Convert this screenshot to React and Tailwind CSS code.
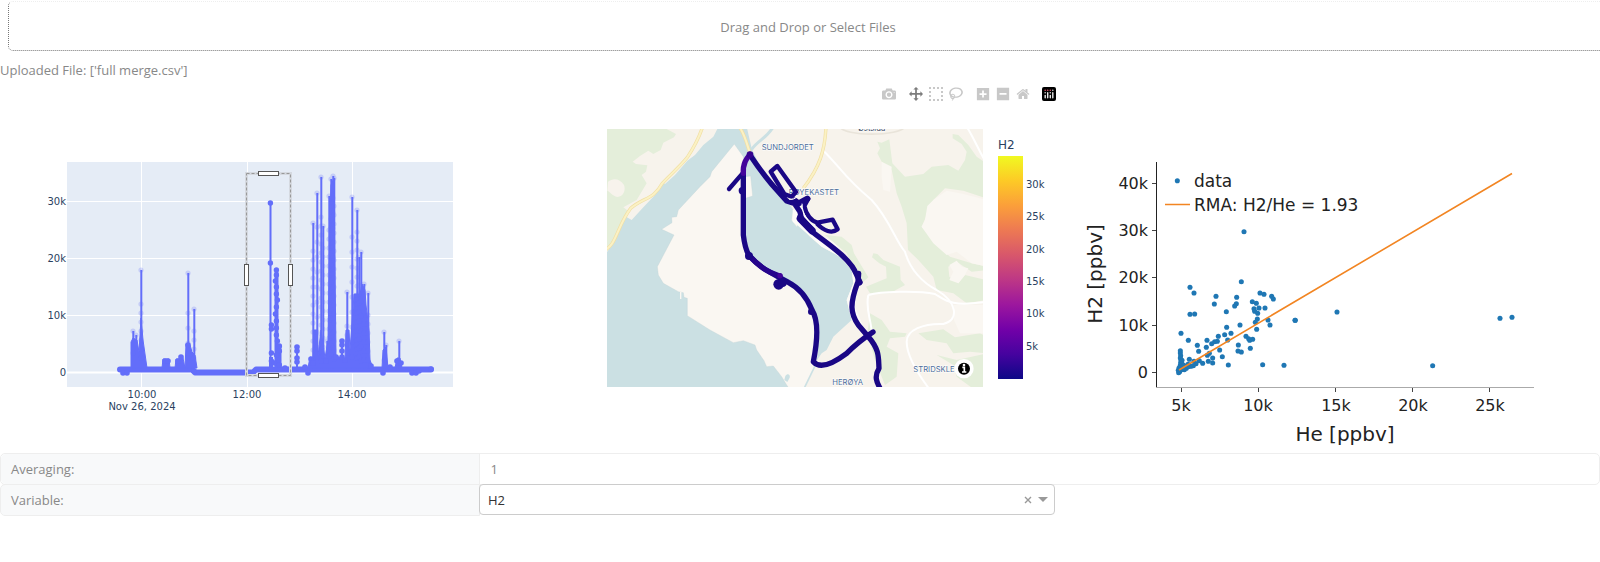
import React, { useState } from "react";

const INDIGO = "#636efa";
const TRACK = "#1a0785";

/* [x, top] of the unselected peaks; every peak falls back to the base line */
const peaks = [
  [133, 331], [136, 335], [141, 270], [188, 273], [194, 309],
  [313, 223], [317, 193], [321, 177], [323, 226], [327, 341], [329, 196],
  [331, 179], [333, 176], [334, 178], [347, 292], [352, 197], [357, 210],
  [359, 257], [361, 252], [364, 284], [368, 293], [384, 332], [386, 345], [399, 341],
];

const denseAreas = [
  "131,368 131,342 133,338 137,340 139,352 141,318 143,340 147,368",
  "162,368 163,359 169,359 170,368",
  "175,368 176,359 179,359 181,355 183,358 185,368",
  "185,368 186,344 190,345 192,352 195,355 197,368",
  "308,368 310,357 313,358 314,330 317,330 318,356 321,330 325,358 328,340 330,220 331,185 334,178 335,270 336,356 341,358 345,360 346,330 349,330 350,350 353,310 354,294 357,294 360,294 362,284 365,290 366,305 369,330 370,360 373,368",
  "382,368 383,350 386,347 388,368",
  "395,368 397,358 400,358 402,368",
];

const bumps = [
  [123, 373], [127, 373], [165, 361], [168, 361], [178, 361], [181, 357], [188, 345], [194, 371],
  [297, 347], [297, 351], [297, 358], [297, 362], [305, 367], [308, 373], [311, 359], [313, 363], [326, 361],
  [336, 357], [342, 341], [342, 345], [342, 351], [342, 357], [345, 360], [371, 366],
  [383, 373], [390, 367], [397, 361], [401, 363], [412, 373], [416, 373], [419, 371], [431, 369], [285, 368],
];

const picked = [
  [270, 203], [270, 263], [271, 325], [271, 329], [271, 353], [271, 361], [276, 270], [276, 275],
  [275, 281], [276, 287], [276, 294], [277, 300], [276, 307], [275, 314], [276, 321], [276, 328],
  [276, 335], [277, 341], [279, 346], [279, 351], [276, 355], [278, 360], [274, 363], [279, 365],
];

function TimeSeries() {
  const halos = [];
  peaks.forEach(([x, top], i) => {
    const step = i % 3 === 0 ? 15 : 9;
    halos.push([x, top]);
    for (let y = top + 22 + (i % 4) * 6; y < 362; y += step) halos.push([x, y]);
  });
  return (
    <svg viewBox="0 80 528 373" className="block w-full" role="img" aria-label="H2 over time">
      <rect x="67" y="162" width="386" height="225" fill="#e5ecf6" />
      <g stroke="#fff" strokeWidth="1">
        <path d="M141.5 162V387M247.5 162V387M352.5 162V387M67 201.5H453M67 258.5H453M67 315.5H453" />
        <path d="M67 372.500H453" strokeWidth="2" />
      </g>
      <g stroke={INDIGO} strokeWidth="6" strokeLinecap="round" strokeLinejoin="round" fill="none">
        <path d="M120 369.500H192L195 372.500H253L256 369.500H431" />
      </g>
      <g stroke={INDIGO} strokeWidth="2">
        {peaks.map(([x, top]) => <line key={x} x1={x + 0.3} x2={x + 0.3} y1={top} y2="369" />)}
        <path d="M270.500 203V369M297 346V369M342 341V369" />
        <path d="M276.500 272V369" strokeWidth="4" />
        <path d="M279.500 345V369M271 357V369" strokeWidth="4" />
      </g>
      <g fill={INDIGO} stroke={INDIGO} strokeLinejoin="round">
        {denseAreas.map((p) => <polygon key={p} points={p} />)}
      </g>
      <g fill={INDIGO} opacity="0.24">
        {halos.map(([x, y]) => <circle key={x + "-" + y} cx={x} cy={y} r="2.6" />)}
      </g>
      <g fill={INDIGO}>
        {bumps.map(([x, y]) => <circle key={x + "-" + y} cx={x} cy={y} r="2.8" />)}
        {picked.map(([x, y]) => <circle key={x + "-" + y} cx={x + 0.4} cy={y} r="2.7" />)}
      </g>
      <rect x="246.5" y="173.500" width="44" height="202" fill="none" stroke="#d5d9e0" strokeWidth="3" />
      <rect x="246.5" y="173.500" width="44" height="202" fill="none" stroke="#999" strokeDasharray="3 2" />
      <g fill="#fff" stroke="#555">
        <rect x="258.500" y="171.500" width="20" height="4" />
        <rect x="258.500" y="373.500" width="20" height="4" />
        <rect x="244.500" y="264.500" width="4" height="21" />
        <rect x="288.500" y="264.500" width="4" height="21" />
      </g>
      <g fill="#2a3f5f" className="font-['DejaVu_Sans',sans-serif] text-[10px]">
        <g textAnchor="end">
          <text x="66" y="205">30k</text>
          <text x="66" y="262">20k</text>
          <text x="66" y="319">10k</text>
          <text x="66" y="376">0</text>
        </g>
        <g textAnchor="middle">
          <text x="142" y="398">10:00</text>
          <text x="142" y="410">Nov 26, 2024</text>
          <text x="247" y="398">12:00</text>
          <text x="352" y="398">14:00</text>
        </g>
      </g>
    </svg>
  );
}

const modeIcons = {
  camera: [1000, "m500 450c-83 0-150-67-150-150 0-83 67-150 150-150 83 0 150 67 150 150 0 83-67 150-150 150z m400 150h-120c-16 0-34 13-39 29l-31 93c-6 15-23 28-40 28h-340c-16 0-34-13-39-28l-31-94c-6-15-23-28-40-28h-120c-55 0-100-45-100-100v-450c0-55 45-100 100-100h800c55 0 100 45 100 100v450c0 55-45 100-100 100z m-400-550c-138 0-250 112-250 250 0 138 112 250 250 250 138 0 250-112 250-250 0-138-112-250-250-250z m365 380c-19 0-35 16-35 35 0 19 16 35 35 35 19 0 35-16 35-35 0-19-16-35-35-35z"],
  pan: [1000, "m1000 350l-187 188 0-125-250 0 0 250 125 0-188 187-187-187 125 0 0-250-250 0 0 125-188-188 186-187 0 125 252 0 0-250-125 0 187-188 188 188-125 0 0 250 250 0 0-126 187 188z"],
  box: [1000, "m0 850l0-143 143 0 0 143-143 0z m286 0l0-143 143 0 0 143-143 0z m285 0l0-143 143 0 0 143-143 0z m286 0l0-143 143 0 0 143-143 0z m-857-286l0-143 143 0 0 143-143 0z m857 0l0-143 143 0 0 143-143 0z m-857-285l0-143 143 0 0 143-143 0z m857 0l0-143 143 0 0 143-143 0z m-857-286l0-143 143 0 0 143-143 0z m286 0l0-143 143 0 0 143-143 0z m285 0l0-143 143 0 0 143-143 0z m286 0l0-143 143 0 0 143-143 0z"],
  lasso: [1031, "m1018 538c-36 207-290 336-568 286-277-48-473-256-436-463 10-57 36-108 76-151-13-66 11-137 68-183 34-28 75-41 114-42l-55-70 0 0c-2-1-3-2-4-3-10-14-8-34 5-45 14-11 34-8 45 4 1 1 2 3 2 5l0 0 113 140c16 11 31 24 45 40 4 3 6 7 8 11 48-3 100 0 151 9 278 48 473 255 436 462z m-624-379c-80 14-149 48-197 96 42 42 109 47 156 9 33-26 47-66 41-105z m-187-74c-19 16-33 37-39 60 50-32 109-55 174-68-42-25-95-24-135 8z m360 75c-34-7-69-9-102-8 8 62-16 128-68 170-73 59-175 54-244-5-9 20-16 40-20 61-28 159 121 317 333 354s407-60 434-217c28-159-121-318-333-355z"],
  plus: [875, "m1 787l0-875 875 0 0 875-875 0z m687-500l-187 0 0-187-125 0 0 187-188 0 0 125 188 0 0 187 125 0 0-187 187 0 0-125z"],
  minus: [875, "m0 788l0-876 876 0 0 876-876 0z m688-500l-500 0 0 125 500 0 0-125z"],
  home: [929, "m786 296v-267q0-15-11-26t-25-10h-214v214h-143v-214h-214q-15 0-25 10t-11 26v267q0 1 0 2t0 2l321 264 321-264q1-1 1-4z m124 39l-34-41q-5-5-12-6h-2q-7 0-12 3l-386 322-386-322q-7-4-13-4-7 2-12 7l-35 41q-4 5-3 13t6 12l401 334q18 15 42 15t43-15l136-114v109q0 8 5 13t13 5h107q8 0 13-5t5-13v-227l122-102q5-5 6-12t-4-13z"],
};

function ModeButton({ icon, label, active }) {
  const [width, path] = modeIcons[icon];
  return (
    <button type="button" aria-label={label} className="flex h-5 w-5 items-center justify-center">
      <svg viewBox={`0 0 ${width} 1000`} className="h-[14px] w-[14px]">
        <path d={path} transform="matrix(1 0 0 -1 0 850)" fill={active ? "#7c7c7c" : "#c8c8c8"} />
      </svg>
    </button>
  );
}

function ModeBar() {
  return (
    <div className="flex h-7 items-center justify-end gap-[7px]">
      <ModeButton icon="camera" label="Download plot as a png" />
      <div className="flex">
        <ModeButton icon="pan" label="Pan" active />
        <ModeButton icon="box" label="Box Select" />
        <ModeButton icon="lasso" label="Lasso Select" />
      </div>
      <div className="flex">
        <ModeButton icon="plus" label="Zoom in" />
        <ModeButton icon="minus" label="Zoom out" />
        <ModeButton icon="home" label="Reset view" />
      </div>
      <a href="#plotly" aria-label="Plotly" className="flex h-5 w-4 items-center justify-end">
        <svg viewBox="0 0 132 132" className="h-[14px] w-[14px]">
          <rect width="132" height="132" rx="18" fill="#000" />
          <g fill="#e5e5e5">
            <circle cx="78" cy="54" r="7" /><circle cx="102" cy="30" r="7" /><circle cx="30" cy="54" r="7" />
          </g>
          <g fill="#e8556a">
            <circle cx="78" cy="30" r="7" /><circle cx="54" cy="30" r="7" /><circle cx="30" cy="30" r="7" />
          </g>
          <path d="M30 78V102M78 78V102M54 54V102M102 54V102" stroke="#fff" strokeWidth="12" strokeLinecap="round" />
        </svg>
      </a>
    </div>
  );
}

function TrackMap() {
  const green = "#e4eeda";
  return (
    <svg viewBox="528 108 528 345" className="block w-full" role="img" aria-label="H2 along the driven track">
      <defs>
        <clipPath id="map-frame"><rect x="607" y="129" width="376" height="258" /></clipPath>
        <linearGradient id="plasma" x1="0" y1="1" x2="0" y2="0">
          <stop offset="0" stopColor="#0d0887" />
          <stop offset="0.111" stopColor="#46039f" />
          <stop offset="0.222" stopColor="#7201a8" />
          <stop offset="0.333" stopColor="#9c179e" />
          <stop offset="0.444" stopColor="#bd3786" />
          <stop offset="0.556" stopColor="#d8576b" />
          <stop offset="0.667" stopColor="#ed7953" />
          <stop offset="0.778" stopColor="#fb9f3a" />
          <stop offset="0.889" stopColor="#fdca26" />
          <stop offset="1" stopColor="#f0f921" />
        </linearGradient>
      </defs>
      <g clipPath="url(#map-frame)">
        <rect x="607" y="129" width="376" height="258" fill="#cbe0e3" />
        <g transform="translate(600 120) scale(0.33333)">
          {/* western shore */}
          <path fill="#f7f3ec" d="M0 0H380L352 27 340 50 310 75 285 105 262 122 225 165 195 192 190 188 165 225 130 262 95 300 78 290 50 350 22 395 0 400Z" />
          <path fill={green} d="M0 0H190L200 27 228 42 222 52 190 68 182 90 160 102 145 92 120 108 98 125 108 132 142 136 138 155 125 165 140 190 110 240 70 262 84 272 80 285 50 350 22 392 0 400Z" />
          <path fill="#f7f3ec" d="M24 185C40 172 60 176 72 195C78 210 70 230 52 231C38 228 30 215 22 212Z" />
          <path fill="none" stroke="#f0dfa4" strokeWidth="10" d="M10 392C50 378 50 320 92 265C130 232 160 240 187 190C210 165 240 140 262 112C280 85 295 60 308 20" />
          <path fill="none" stroke="#fbf1c4" strokeWidth="6" d="M10 392C50 378 50 320 92 265C130 232 160 240 187 190C210 165 240 140 262 112C280 85 295 60 308 20" />
          {/* peninsula */}
          <path fill="#faf7f2" stroke="#bfd2d3" d="M403 72L430 110 435 170 452 168 458 228 436 235 436 350 452 405 500 450 570 485 610 520 645 590 655 700 645 740 615 810H570L560 795 545 770 520 738 500 740 492 722 470 690 465 675 430 662 400 668 330 630 262 587 262 535 252 532 250 518 235 515 190 490 175 465 172 440 222 345 185 328 216 308 215 292 230 290 235 270 300 200 330 170 335 155Z" />
          <path d="M242 516V537" stroke="#faf7f2" strokeWidth="4" />
          <path fill="#cbe0e3" d="M556 768C562 758 572 763 569 773L562 786 553 780Z" />
          {/* eastern mainland */}
          <path fill="#f7f3ec" d="M440 20H1160V810H610L640 740 655 715 665 700 680 690 700 650 755 600 740 540 760 490 755 450 720 410 665 380 630 350 595 310 590 320 575 300 580 270 560 240 480 140 455 85Z" />
          <path fill="#fdfbf8" d="M578 270L600 255 625 300 660 345 700 365 757 430 775 490 765 560 790 620 755 600 740 540 760 490 755 450 720 410 665 380 595 318 578 305Z" />
          <path fill="none" stroke="#cbe0e3" strokeWidth="9" d="M520 20C500 55 475 60 455 88" />
          <path fill="none" stroke="#cbe0e3" strokeWidth="5" d="M645 738L610 810" />
          <path fill="none" stroke="#f0dfa4" strokeWidth="10" d="M418 20C435 45 440 70 450 100" />
          <path fill="none" stroke="#fbf1c4" strokeWidth="6" d="M418 20C435 45 440 70 450 100" />
          <g transform="translate(570 0)">
            <g fill={green}>
              <path d="M262 65L275 68 298 58 302 90 307 130 345 170 400 162 425 140 475 135 505 152 525 120 530 95 515 72 488 55 488 42 505 45 535 75 560 110 590 130V235L520 212 465 205 430 240 395 320 440 375 480 410 545 430 590 440V450L545 455 500 425 475 440 478 470 505 490 525 465 590 480V540L530 550 490 520 440 510 430 470 385 420 354 390 350 310 335 260 320 220 305 150 275 125 262 100 270 85Z" />
              <path d="M250 400L262 402 280 420 330 440 332 480 345 495 300 520 240 520 228 500 290 475 288 440 268 430 246 412Z" />
              <path d="M105 345L155 350 185 375 192 400 235 472 215 490 170 400Z" />
              <path d="M240 580L275 600 300 635 350 640 345 650 300 655 290 680 325 700 320 770 285 795 255 720 232 640Z" />
              <path d="M385 640L460 628 495 652 570 640 590 650V700L540 695 490 700 470 670 410 660ZM440 705L500 720 590 700V810H555L500 770 490 735Z" />
            </g>
            <path fill="#faf7f2" d="M395 320L405 300 412 258 430 240 470 212 520 222 590 240V440L545 430 500 395 470 405 430 370Z" />
            <path fill="#faf7f2" d="M478 435L500 422 515 440 535 445 525 465 505 490 478 480 490 455ZM275 125L305 140 300 215 280 210 275 170ZM490 555H590V640L510 640 492 600Z" />
            <path fill="none" stroke="#e9e4da" strokeWidth="5" d="M150 20C160 50 330 50 345 20" />
            <g fill="none" stroke="#fff" strokeWidth="6">
              <path d="M100 92C150 140 160 170 245 240C300 300 320 370 345 395C360 450 400 490 440 510C500 545 510 600 460 612C400 610 350 630 350 665C350 710 390 770 420 810" />
              <path d="M235 525C270 515 380 510 435 522C465 540 480 562 590 545M235 525C225 570 245 600 245 640M530 20C555 60 570 100 590 130" />
            </g>
            <path fill="none" stroke="#f0dfa4" strokeWidth="10" d="M108 20C105 90 90 140 40 205" />
            <path fill="none" stroke="#fbf1c4" strokeWidth="6" d="M108 20C105 90 90 140 40 205" />
          </g>
          <g fill="#4d6d9a" stroke="#fff" strokeWidth="3" paintOrder="stroke" className="font-['Inter',sans-serif] text-[23px]">
            <text x="485" y="90">SUNDJORDET</text>
            <text x="717" y="224" textAnchor="end">RØYEKASTET</text>
            <text x="940" y="755">STRIDSKLE</text>
            <text x="697" y="794">HERØYA</text>
            <text x="774" y="32" fill="#333f5c">Østsida</text>
          </g>
          {/* measured track */}
          <g fill="none" stroke={TRACK} strokeWidth="16" strokeLinecap="round" strokeLinejoin="round">
            <path d="M430 160V345C433 370 438 390 446 405C490 455 530 465 565 487C600 505 620 530 636 570C655 600 655 650 640 725C660 748 700 730 740 700C770 670 790 655 819 636" />
            <path d="M387 207L425 163" strokeWidth="13" />
            <path d="M450 105C480 150 500 178 535 215L560 243 583 250 600 275 605 300" />
            <path d="M553 222L512 155 532 138 588 216 575 230Z" strokeWidth="13" />
            <path d="M585 242L596 250 622 236" strokeWidth="18" />
            <path d="M625 236L613 258C618 285 635 304 652 308L698 299 713 328C695 342 672 332 652 312" strokeWidth="13" />
            <path d="M600 290L640 338C690 375 755 420 770 465L780 487" />
            <path d="M601 296L636 332" strokeWidth="22" />
            <path d="M774 486L776 460M772 490C750 550 750 580 775 615L805 650C840 690 835 715 837 745C822 770 830 785 840 805" />
            <path d="M430 160C428 130 440 115 450 103" stroke="#43049b" />
            <path d="M446 405C490 455 520 460 540 468" stroke="#26048c" />
          </g>
          <g fill="none" stroke="#fff" strokeWidth="3" strokeLinecap="round">
            <path d="M568 238Q584 240 592 229M606 252C606 282 624 304 646 322" />
          </g>
          <g fill={TRACK}>
            <circle cx="427" cy="212" r="11" /><circle cx="447" cy="408" r="12" /><circle cx="536" cy="493" r="16" />
            <circle cx="548" cy="488" r="13" /><circle cx="777" cy="487" r="10" /><circle cx="634" cy="575" r="10" />
            <circle cx="450" cy="104" r="10" fill="#35038f" /><circle cx="540" cy="467" r="8" fill="#43049b" />
          </g>
          <circle cx="1092" cy="746" r="29" fill="#fff" />
          <circle cx="1092" cy="746" r="18" fill="#000" />
          <path d="M1087 742H1093V756M1086 756H1099" fill="none" stroke="#fff" strokeWidth="5" />
          <circle cx="1092" cy="735" r="4" fill="#fff" />
        </g>
      </g>
      <rect x="998" y="156" width="25" height="223" fill="url(#plasma)" />
      <g fill="#2a3f5f" className="font-['DejaVu_Sans',sans-serif] text-[10px]">
        <text x="998" y="149" className="text-[12px]">H2</text>
        <text x="1026" y="188">30k</text>
        <text x="1026" y="220">25k</text>
        <text x="1026" y="253">20k</text>
        <text x="1026" y="285">15k</text>
        <text x="1026" y="317">10k</text>
        <text x="1026" y="350">5k</text>
      </g>
    </svg>
  );
}

/* thirds of a pixel, measured from (1070, 150) */
const samples = [
  [522, 245], [514, 395], [360, 412], [372, 429], [438, 439], [433, 462], [500, 442], [499, 461], [494, 468],
  [570, 429], [582, 433], [605, 439], [610, 447], [547, 455], [559, 460], [552, 476], [567, 474], [585, 474],
  [554, 484], [563, 490], [469, 485], [360, 493], [374, 492], [562, 507], [594, 510], [556, 517], [600, 525],
  [510, 525], [675, 511], [470, 532], [560, 538], [333, 550], [483, 550], [464, 554], [445, 559], [528, 559],
  [536, 566], [548, 568], [473, 570], [355, 571], [411, 571], [442, 574], [434, 575], [425, 581], [382, 586],
  [505, 585], [409, 592], [541, 595], [449, 600], [386, 604], [504, 603], [514, 606], [457, 620], [412, 616],
  [418, 610], [428, 624], [428, 639], [415, 634], [398, 640], [388, 632], [475, 645], [578, 644], [642, 646],
  [358, 628], [372, 634], [378, 641], [370, 647], [363, 649], [354, 643], [349, 655], [343, 659], [339, 652],
  [331, 602], [331, 609], [332, 617], [331, 624], [333, 631], [336, 631], [332, 638], [336, 641], [331, 646],
  [337, 648], [333, 654], [327, 654], [325, 661], [329, 665], [326, 668], [335, 659], [341, 646], [355, 650],
  [539, 571], [801, 486], [676, 511], [1088, 647], [1290, 505], [1326, 502],
];

function Scatter() {
  return (
    <svg viewBox="1056 80 528 373" className="block w-full" role="img" aria-label="H2 against He">
      <path d="M1156.500 162V387" stroke="#222" />
      <path d="M1156 387.500H1534" stroke="#aaa" />
      <path d="M1152 183.500H1156M1152 230.500H1156M1152 277.500H1156M1152 325.500H1156M1152 372.500H1156M1181.500 388V392M1258.500 388V392M1335.500 388V392M1412.500 388V392M1489.500 388V392" stroke="#444" />
      <g transform="translate(1070 150) scale(0.33333)" fill="#1f77b4">
        {samples.map(([x, y], i) => <circle key={i} cx={x} cy={y} r="7.6" />)}
        <circle cx="322" cy="92" r="7.6" />
      </g>
      <path d="M1179 370L1512 173.500M1165 204.500H1190" stroke="#f28522" strokeWidth="1.600" />
      <g fill="#222" className="font-['DejaVu_Sans',sans-serif] text-[16px]">
        <g textAnchor="end">
          <text x="1148" y="189">40k</text>
          <text x="1148" y="236">30k</text>
          <text x="1148" y="283">20k</text>
          <text x="1148" y="331">10k</text>
          <text x="1148" y="378">0</text>
        </g>
        <g textAnchor="middle">
          <text x="1181" y="411">5k</text>
          <text x="1258" y="411">10k</text>
          <text x="1336" y="411">15k</text>
          <text x="1413" y="411">20k</text>
          <text x="1490" y="411">25k</text>
        </g>
        <g className="text-[17px]">
          <text x="1194" y="187">data</text>
          <text x="1194" y="211">RMA: H2/He = 1.93</text>
        </g>
        <g className="text-[20px]" textAnchor="middle">
          <text x="1345" y="441">He [ppbv]</text>
          <text transform="translate(1102 274) rotate(-90)">H2 [ppbv]</text>
        </g>
      </g>
    </svg>
  );
}

export default function App() {
  const [averaging, setAveraging] = useState("1");
  const [variable, setVariable] = useState("H2");
  return (
    <main className="overflow-x-hidden bg-white pt-px font-['Open_Sans','Noto_Sans',sans-serif] text-[13px] leading-5 text-[#888]">
      <label className="-mr-2 ml-2 flex h-[50px] cursor-pointer items-center justify-center rounded-[5px] border border-dotted border-[#777] border-t-[#eee] pt-0.5">
        Drag and Drop or Select Files
        <input type="file" className="sr-only" />
      </label>
      <p className="mt-[9px]">Uploaded File: ['full merge.csv']</p>
      <div className="flex items-start">
        <section className="w-[33%]"><TimeSeries /></section>
        <section className="w-[33%]"><ModeBar /><TrackMap /></section>
        <section className="w-[33%]"><Scatter /></section>
      </div>
      <form>
        <div className="flex h-8 rounded-[5px] border border-[#eee]">
          <label htmlFor="averaging" className="flex w-[30%] items-center rounded-l-[5px] border-r border-[#eee] bg-[#f8f9fa] pl-2.5">
            Averaging:
          </label>
          <input
            id="averaging"
            type="text"
            value={averaging}
            onChange={(e) => setAveraging(e.target.value)}
            className="min-w-0 flex-1 bg-transparent px-2.5 outline-none"
          />
        </div>
        <div className="-mt-px flex h-8">
          <label htmlFor="variable" className="flex w-[30%] items-center rounded-l-[5px] border border-[#eee] bg-[#f8f9fa] pl-2.5">
            Variable:
          </label>
          <div className="-ml-px flex h-[31px] w-[36%] items-center rounded border border-[#ccc] bg-white pr-1.5">
            <select
              id="variable"
              value={variable}
              onChange={(e) => setVariable(e.target.value)}
              className="min-w-0 flex-1 appearance-none bg-transparent pl-2 text-[#333] outline-none"
            >
              <option value="H2">H2</option>
              <option value="">Select...</option>
            </select>
            <button type="button" aria-label="Clear value" onClick={() => setVariable("")} className="flex h-5 w-4 items-center justify-center">
              <svg viewBox="0 0 8 8" className="h-2 w-2"><path d="M1 1L7 7M7 1L1 7" stroke="#999" strokeWidth="1.400" /></svg>
            </button>
            <svg viewBox="0 0 10 5" className="ml-0.5 h-[5px] w-2.5"><path d="M0 0H10L5 5Z" fill="#999" /></svg>
          </div>
        </div>
      </form>
    </main>
  );
}
